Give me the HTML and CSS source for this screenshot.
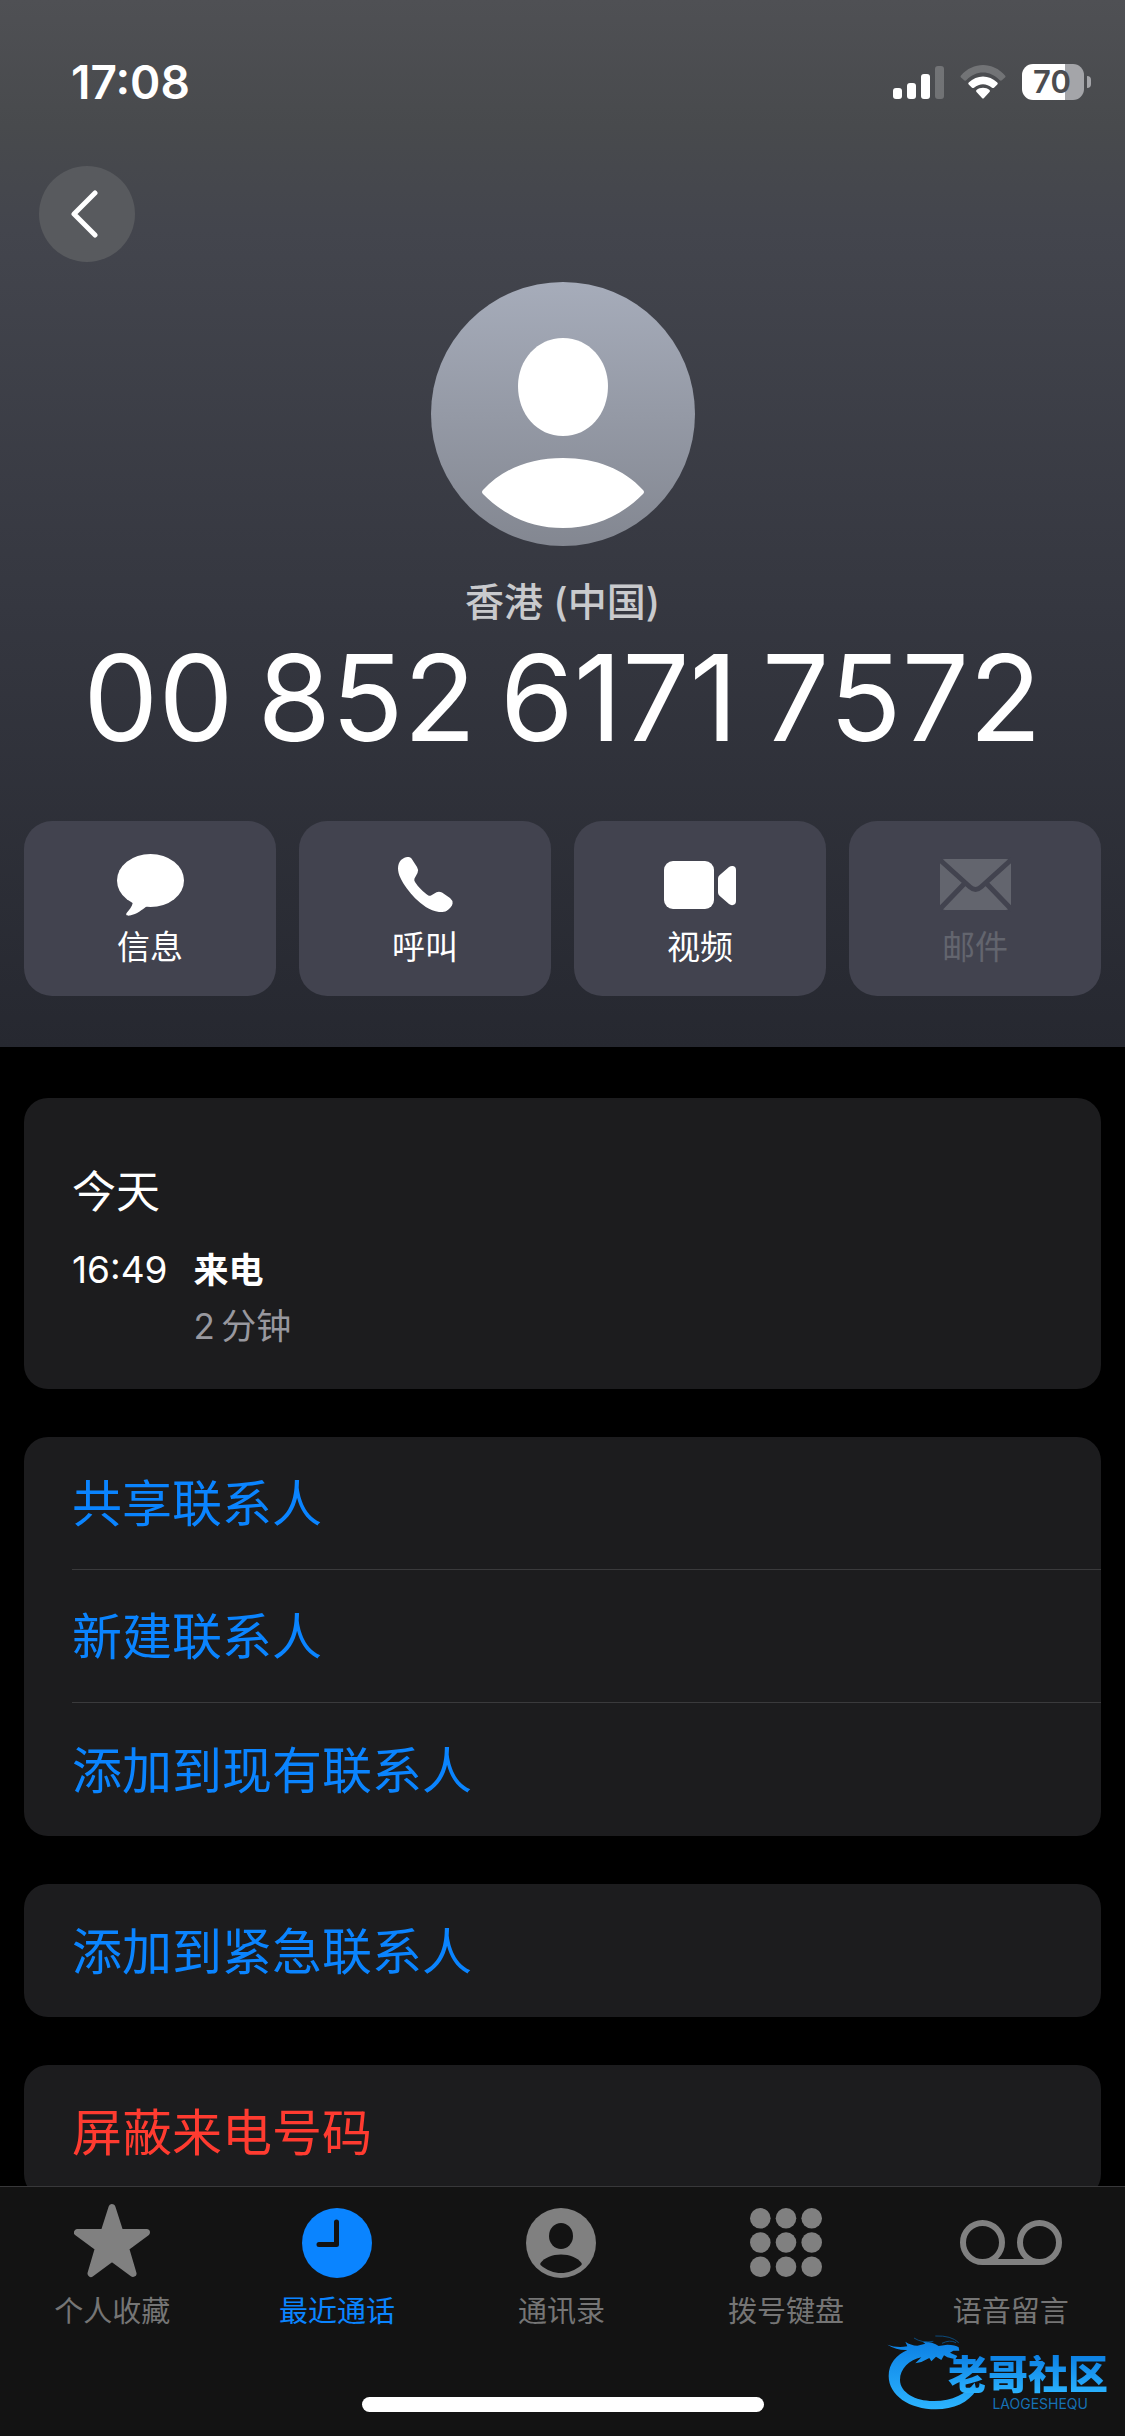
FILE: index.html
```html
<!DOCTYPE html>
<html lang="zh-CN">
<head>
<meta charset="utf-8">
<meta name="viewport" content="width=device-width, initial-scale=1">
<title>通话详情</title>
<link rel="stylesheet" href="styles.css">
</head>
<body>
<div class="app">
  <div class="scroll">
    <header class="hero">
      <div class="status">
        <time class="clock">17:08</time>
        <div class="status-icons">
          <svg class="signal" viewBox="0 0 51 33" aria-hidden="true">
            <rect x="0" y="22" width="9" height="11" rx="3"/>
            <rect x="14" y="17" width="9" height="16" rx="3"/>
            <rect x="28" y="8" width="9" height="25" rx="3"/>
            <rect x="42" y="0" width="9" height="33" rx="3" opacity=".22"/>
          </svg>
          <svg class="wifi" viewBox="0 0 46 34" aria-hidden="true">
            <path opacity=".22" d="M1 10.500C13-3.500 33-3.500 45 10.500Q46 11.500 45 12.500L41.500 15.500Q40.500 16 39.500 15C30 5 16 5 6.500 15Q5.500 16 4.500 15.500L1 12.500Q0 11.500 1 10.500Z"/>
            <path d="M8.700 17.500C17 9.500 29 9.500 37.300 17.500Q38.300 18.500 37.300 19.500L34 22.700Q33 23.500 32 22.700C26.500 18 19.500 18 14 22.700Q13 23.500 12 22.700L8.700 19.500Q7.700 18.500 8.700 17.500Z"/>
            <path d="M16.500 25C20 22 26 22 29.500 25Q30.500 26 29.500 27L24 33Q23 34 22 33L16.500 27Q15.500 26 16.500 25Z"/>
          </svg>
          <div class="battery"><span class="battery-body">70</span><span class="battery-tip"></span></div>
        </div>
      </div>
      <button class="back" type="button" aria-label="返回">
        <svg viewBox="0 0 30 48" aria-hidden="true"><path d="M26 3 5 24 26 45"/></svg>
      </button>
      <svg class="avatar" viewBox="0 0 264 264" aria-hidden="true">
        <defs><linearGradient id="av" x1="0" y1="0" x2="0" y2="1"><stop offset="0" stop-color="#a6acba"/><stop offset="1" stop-color="#838791"/></linearGradient></defs>
        <circle cx="132" cy="132" r="132" fill="url(#av)"/>
        <path fill="#fff" d="M132 56C158 56 177 78 177 104C177 132 158 154 132 154C106 154 87 132 87 104C87 78 106 56 132 56Z"/>
        <path fill="#fff" d="M52 208C71 187 99 176 132 176C165 176 193 187 212 208Q214 210 212 212C189 235 162 246 132 246C102 246 75 235 52 212Q50 210 52 208Z"/>
      </svg>
      <p class="region">香港 (中国)</p>
      <h1 class="number"><span>00</span> <span>852</span> <span>6171</span> <span>7572</span></h1>
      <div class="actions">
        <button class="action" type="button">
          <svg class="action-icon" width="67" height="64" viewBox="0 -1 67 64" aria-hidden="true"><ellipse cx="33.500" cy="26.500" rx="33.500" ry="26.500"/><path d="M16 48C15 53 12 56 10 58.500C8 61 10 62 13 61.500C20 60 25 56 30 52Z"/></svg>
          <span>信息</span>
        </button>
        <button class="action" type="button">
          <svg class="action-icon" width="55" height="64" viewBox="0 -4 55 64" aria-hidden="true"><path d="M3 3C5.500 1 7.500 0 9.400 0C11 0 12.500 .4 13.500 1.500L19 10Q21 13 19.500 16L16.500 21.500Q15.800 23 17 25C20 30 25.500 35 30 38.300Q31.600 39.300 33 38.500L38.500 35.300Q41 34 44 35.500L52 41Q55 43.500 54.600 46.500C54 49.500 51.500 52 48.800 53.700C46.500 55 43.500 55.300 41 55C36.500 54.500 32 52.500 27.800 50C20 45 13.500 38 8.700 31.300C3.500 24 0 17.500 0 11.300C0 8 1 5 3 3Z"/></svg>
          <span>呼叫</span>
        </button>
        <button class="action" type="button">
          <svg class="action-icon" width="72" height="64" viewBox="0 -8 72 64" aria-hidden="true"><rect width="50" height="48" rx="9"/><path d="M54 17.500Q54 15.500 55.500 14.200L65 6Q67 4.500 69 5Q72 5.500 72 9V40Q72 43.500 69 44Q67 44.500 65 43L55.500 34.800Q54 33.500 54 31.500Z"/></svg>
          <span>视频</span>
        </button>
        <button class="action" type="button" disabled>
          <svg class="action-icon" width="71" height="64" viewBox="0 -6 71 64" aria-hidden="true"><rect width="71" height="51" rx="5"/><g class="fold"><path d="M-1 0 30 28Q35.500 33 41 28L72 0M-1 51 24 25M72 51 47 25"/></g></svg>
          <span>邮件</span>
        </button>
      </div>
    </header>

    <main class="content">
      <section class="card history">
        <h2 class="day">今天</h2>
        <dl class="call">
          <dt>16:49</dt>
          <dd class="kind">来电</dd>
          <dd class="duration">2&thinsp;分钟</dd>
        </dl>
      </section>
      <section class="card list">
        <button class="row" type="button">共享联系人</button>
        <button class="row" type="button">新建联系人</button>
        <button class="row" type="button">添加到现有联系人</button>
      </section>
      <section class="card list">
        <button class="row" type="button">添加到紧急联系人</button>
      </section>
      <section class="card list">
        <button class="row danger" type="button">屏蔽来电号码</button>
      </section>
    </main>
  </div>

  <nav class="tabbar">
    <div class="tabs">
      <a class="tab" href="#favorites">
        <svg class="tab-icon" width="76" height="80" viewBox="0 -1 76 80" aria-hidden="true"><path stroke="currentColor" stroke-width="7" stroke-linejoin="round" d="M38 3.500 46 28.500H72.500L51.500 44 59 69.500 38 54 17 69.500 24.500 44 3.500 28.500H30Z"/></svg>
        <span>个人收藏</span>
      </a>
      <a class="tab active" href="#recents" aria-current="page">
        <svg class="tab-icon" width="70" height="80" viewBox="0 -5 70 80" aria-hidden="true"><circle cx="35" cy="35" r="35"/><path class="hands" d="M34.500 14V36.500H17"/></svg>
        <span>最近通话</span>
      </a>
      <a class="tab" href="#contacts">
        <svg class="tab-icon" width="70" height="80" viewBox="0 -5 70 80" aria-hidden="true"><circle cx="35" cy="35" r="35"/><g class="cutout"><ellipse cx="35" cy="28" rx="12" ry="13"/><path d="M14.500 55C19 49.500 26 46.500 35 46.500C44 46.500 51 49.500 55.500 55Q56 56 55.500 57C49 62.500 42 65 35 65C28 65 21 62.500 14.500 57Q14 56 14.500 55Z"/></g></svg>
        <span>通讯录</span>
      </a>
      <a class="tab" href="#keypad">
        <svg class="tab-icon" width="72" height="80" viewBox="0 -5 72 80" aria-hidden="true"><circle cx="10.300" cy="10.300" r="10.300"/><circle cx="36" cy="10.300" r="10.300"/><circle cx="61.700" cy="10.300" r="10.300"/><circle cx="10.300" cy="34.500" r="10.300"/><circle cx="36" cy="34.500" r="10.300"/><circle cx="61.700" cy="34.500" r="10.300"/><circle cx="10.300" cy="58.700" r="10.300"/><circle cx="36" cy="58.700" r="10.300"/><circle cx="61.700" cy="58.700" r="10.300"/></svg>
        <span>拨号键盘</span>
      </a>
      <a class="tab" href="#voicemail">
        <svg class="tab-icon" width="102" height="80" viewBox="0 -17 102 80" aria-hidden="true"><g fill="none" stroke="currentColor" stroke-width="6"><circle cx="22.500" cy="22.500" r="19.500"/><circle cx="79.500" cy="22.500" r="19.500"/><path d="M22.500 42H79.500"/></g></svg>
        <span>语音留言</span>
      </a>
    </div>
    <div class="home-indicator"></div>
    <div class="watermark">
      <svg class="dragon" viewBox="51 45 270 228" aria-hidden="true">
        <defs><linearGradient id="dg" x1="0" y1="0" x2="0" y2="1"><stop offset="0" stop-color="#0c80e4"/><stop offset="1" stop-color="#2cb4ff"/></linearGradient></defs>
        <path fill="url(#dg)" d="M52 74Q78 84 112 79L106 65Q122 76 142 77L166 71 156 64Q190 66 206 78L232 74Q256 74 266 82L268 92 250 92 240 98 262 108 256 118 232 112 222 106 214 120 198 110 184 124 178 114 154 126 136 130 154 112C118 120 90 146 90 180C90 218 138 244 192 243C248 242 288 222 314 188L319 210C296 248 250 268 198 268C118 268 56 226 56 168C56 130 80 104 112 90Q82 92 52 74Z"/>
        <path fill="none" stroke="#0b4a7c" stroke-width="3" d="M132 54Q156 70 190 64M196 48Q244 46 266 68M216 70Q240 58 258 68"/>
      </svg>
      <span class="mark-name">老哥社区</span>
      <span class="mark-sub">LAOGESHEQU</span>
    </div>
  </nav>
</div>
</body>
</html>
```
FILE: styles.css
```css
* { box-sizing: border-box; }

body {
  margin: 0;
  background: #000;
  color: #fff;
  font-family: Inter, "Noto Sans CJK SC", sans-serif;
}

h1, h2, p, dl, dd { margin: 0; font-weight: 400; }

button {
  border: 0;
  padding: 0;
  background: none;
  color: inherit;
  font: inherit;
}

svg { display: block; fill: currentColor; }

.app {
  display: flex;
  flex-direction: column;
  height: 100vh;
}

.scroll {
  flex: 1;
  min-height: 0;
  overflow-y: auto;
  scrollbar-width: none;
}

/* Header */
.hero {
  display: flex;
  flex-direction: column;
  padding: 58px 24px 51px;
  background: linear-gradient(#4f5054 0%, #484a4d 12%, #43454d 22%, #353740 58%, #262830 100%);
}

.status {
  display: flex;
  justify-content: space-between;
  align-items: center;
  height: 48px;
  padding: 0 10px 0 47px;
}

.clock { font-size: 46px; font-weight: 600; line-height: 48px; }

.status-icons { display: flex; align-items: center; gap: 16px; }
.signal { width: 51px; height: 33px; }
.wifi { width: 46px; height: 34px; }

.battery { display: flex; align-items: center; gap: 3px; }
.battery-body {
  width: 62px;
  height: 36px;
  padding-right: 2px;
  border-radius: 11px;
  background: linear-gradient(90deg, #fff 70%, #a4a5a9 70%);
  color: #4b4c50;
  font-size: 31px;
  font-weight: 600;
  line-height: 36px;
  text-align: center;
}
.battery-tip {
  width: 4px;
  height: 12px;
  border-radius: 0 6px 6px 0;
  background: #a4a5a9;
}

.back {
  display: flex;
  align-items: center;
  justify-content: center;
  width: 96px;
  height: 96px;
  margin: 60px 0 0 15px;
  padding-right: 6px;
  border-radius: 50%;
  background: #585a5e;
}
.back svg {
  width: 30px;
  height: 48px;
  fill: none;
  stroke: #fff;
  stroke-width: 5;
  stroke-linecap: round;
  stroke-linejoin: round;
}

.avatar { width: 264px; height: 264px; margin: 20px auto 0; }

.region {
  margin-top: 32px;
  color: #c9cacd;
  font-size: 39px;
  font-weight: 500;
  line-height: 48px;
  text-align: center;
}

.number {
  display: flex;
  justify-content: center;
  gap: 24px;
  margin-top: 12px;
  font-size: 119px;
  font-kerning: none;
  line-height: 120px;
  white-space: nowrap;
}

.actions {
  display: grid;
  grid-template-columns: repeat(4, 1fr);
  gap: 23px;
  margin-top: 63px;
}

.action {
  display: flex;
  flex-direction: column;
  align-items: center;
  gap: 10px;
  padding: 32px 0 29px;
  border-radius: 28px;
  background: #42434f;
  font-size: 33px;
  line-height: 40px;
}
.action:disabled { color: #63656e; }
.fold path { fill: none; stroke: #42434f; stroke-width: 5; }

/* Cards */
.content {
  display: flex;
  flex-direction: column;
  gap: 48px;
  padding: 51px 24px 48px;
}

.card { border-radius: 24px; background: #1c1c1e; }

.history { padding: 66px 48px 35px; }
.day { font-size: 44px; line-height: 56px; }
.call {
  display: grid;
  grid-template-columns: auto 1fr;
  column-gap: 26px;
  margin-top: 22px;
  font-size: 35px;
  line-height: 56px;
}
.call dt { font-size: 37px; }
.kind { font-weight: 600; }
.duration { grid-column: 2; color: #98989f; }

.list { overflow: hidden; padding-left: 48px; }
.row {
  display: block;
  width: 100%;
  height: 133px;
  padding-top: 2px;
  color: #0a84ff;
  font-size: 50px;
  line-height: 130px;
  text-align: left;
}
.row:not(:last-child) { border-bottom: 1px solid #3a3a3c; }
.danger { color: #ff3b30; }

/* Tab bar */
.tabbar {
  position: relative;
  padding: 16px 0 24px;
  border-top: 1px solid #38383a;
  background: #131313;
}
.tabs { display: grid; grid-template-columns: repeat(5, 1fr); padding-right: 2px; }
.tab {
  display: flex;
  flex-direction: column;
  align-items: center;
  gap: 11px;
  color: #757575;
  font-size: 29px;
  line-height: 36px;
  text-decoration: none;
}
.tab-icon { color: #808080; }
.active, .active .tab-icon { color: #0a84ff; }
.hands {
  fill: none;
  stroke: #131313;
  stroke-width: 5;
  stroke-linecap: round;
  stroke-linejoin: round;
}
.cutout { fill: #131313; }

.home-indicator {
  width: 402px;
  height: 15px;
  margin: 67px auto 0;
  border-radius: 8px;
  background: #fff;
}

.watermark {
  position: absolute;
  right: 17px;
  bottom: 25px;
  width: 221px;
  height: 76px;
}
.dragon { width: 90px; height: 76px; }
.mark-name {
  position: absolute;
  right: 0;
  top: 20px;
  background: linear-gradient(#0c80e4, #2cb4ff);
  background-clip: text;
  color: transparent;
  font-size: 40px;
  font-weight: 900;
  line-height: 40px;
}
.mark-sub {
  position: absolute;
  right: 20px;
  top: 62px;
  color: #1670b4;
  font-size: 14px;
  line-height: 14px;
}
```
